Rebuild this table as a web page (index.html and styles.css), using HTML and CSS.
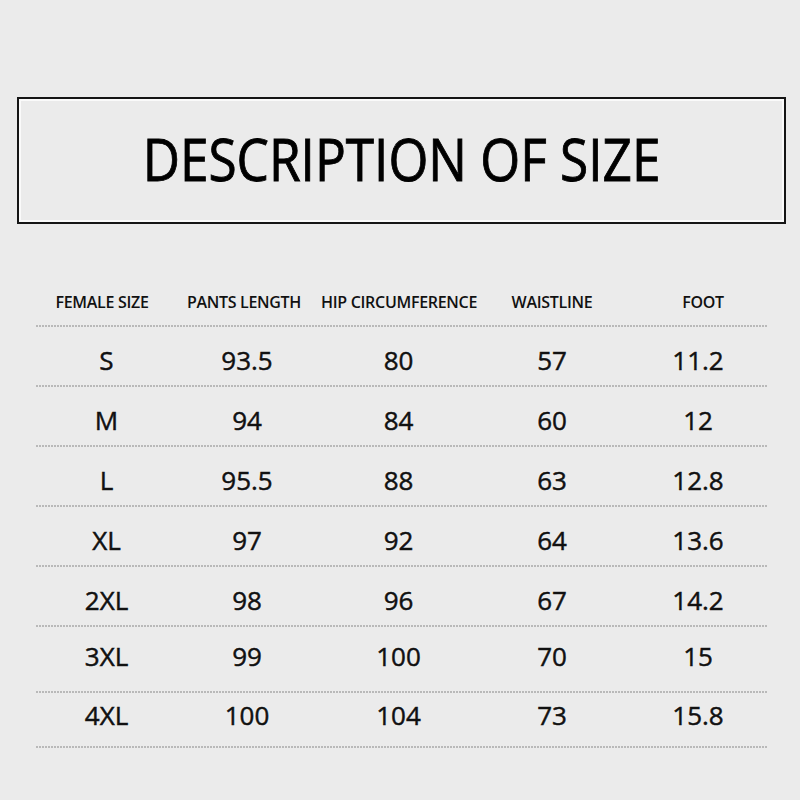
FILE: index.html
```html
<!DOCTYPE html>
<html>
<head>
<meta charset="utf-8">
<link rel="stylesheet" href="styles.css">
</head>
<body>
<div class="page">
  <div class="title-box">
    <h1 class="title">DESCRIPTION OF SIZE</h1>
  </div>
  <div class="table">
    <div class="row head">
      <div class="cell">FEMALE SIZE</div>
      <div class="cell">PANTS LENGTH</div>
      <div class="cell">HIP CIRCUMFERENCE</div>
      <div class="cell">WAISTLINE</div>
      <div class="cell foot-h">FOOT</div>
    </div>
    <div class="row"><div class="cell">S</div><div class="cell">93.5</div><div class="cell">80</div><div class="cell">57</div><div class="cell">11.2</div></div>
    <div class="row"><div class="cell">M</div><div class="cell">94</div><div class="cell">84</div><div class="cell">60</div><div class="cell">12</div></div>
    <div class="row"><div class="cell">L</div><div class="cell">95.5</div><div class="cell">88</div><div class="cell">63</div><div class="cell">12.8</div></div>
    <div class="row"><div class="cell">XL</div><div class="cell">97</div><div class="cell">92</div><div class="cell">64</div><div class="cell">13.6</div></div>
    <div class="row"><div class="cell">2XL</div><div class="cell">98</div><div class="cell">96</div><div class="cell">67</div><div class="cell">14.2</div></div>
    <div class="row tall"><div class="cell">3XL</div><div class="cell">99</div><div class="cell">100</div><div class="cell">70</div><div class="cell">15</div></div>
    <div class="row short"><div class="cell">4XL</div><div class="cell">100</div><div class="cell">104</div><div class="cell">73</div><div class="cell">15.8</div></div>
  </div>
</div>
</body>
</html>
```
FILE: styles.css
```css
html, body {
  margin: 0;
  padding: 0;
  background: #ebebeb;
}
.page {
  width: 800px;
  height: 800px;
  box-sizing: border-box;
  padding-top: 97px;
  font-family: "Open Sans", "DejaVu Sans", sans-serif;
  color: #111;
}
.title-box {
  margin-left: 17px;
  width: 769px;
  height: 127px;
  box-sizing: border-box;
  border: 2px solid #151515;
  box-shadow: inset 0 0 0 2px #fafafa;
  display: flex;
  align-items: center;
  justify-content: center;
}
.title {
  margin: 0;
  margin-top: -4px;
  font-size: 59px;
  font-weight: 400;
  line-height: 1;
  color: #000;
  -webkit-text-stroke: 0.9px #000;
  transform: scaleX(0.87);
  white-space: nowrap;
}
.table {
  margin-top: 52px;
  margin-left: 36px;
  width: 732px;
}
.row {
  display: grid;
  grid-template-columns: 137px 148px 155px 152px 140px;
  height: 60px;
  align-items: center;
  background-image: repeating-linear-gradient(90deg, #b9b9b9 0 2px, transparent 2px 3px);
  background-repeat: no-repeat;
  background-size: 100% 2px;
  background-position: bottom left;
  box-sizing: border-box;
  padding-top: 5px;
}
.row.head {
  height: 51px;
  padding-top: 0;
}
.row.tall { height: 66px; padding-top: 0; padding-bottom: 8px; }
.row.short { height: 55px; padding-top: 0; padding-bottom: 11px; }
.cell {
  text-align: center;
  font-size: 26px;
  font-weight: 400;
  line-height: 1;
  white-space: nowrap;
  color: #111;
  -webkit-text-stroke: 0.5px #111;
  text-shadow: 0 0 2px #fff, 0 0 1px #fff;
}
.row .cell:first-child { padding-left: 4px; }
.head .cell {
  font-size: 16px;
  font-weight: 600;
  letter-spacing: -0.3px;
  -webkit-text-stroke: 0;
  text-shadow: none;
}
.head .cell:first-child { padding-left: 0; padding-right: 5px; }
.head .cell:nth-child(2) { padding-right: 6px; }
.head .foot-h { padding-left: 10px; }
```
